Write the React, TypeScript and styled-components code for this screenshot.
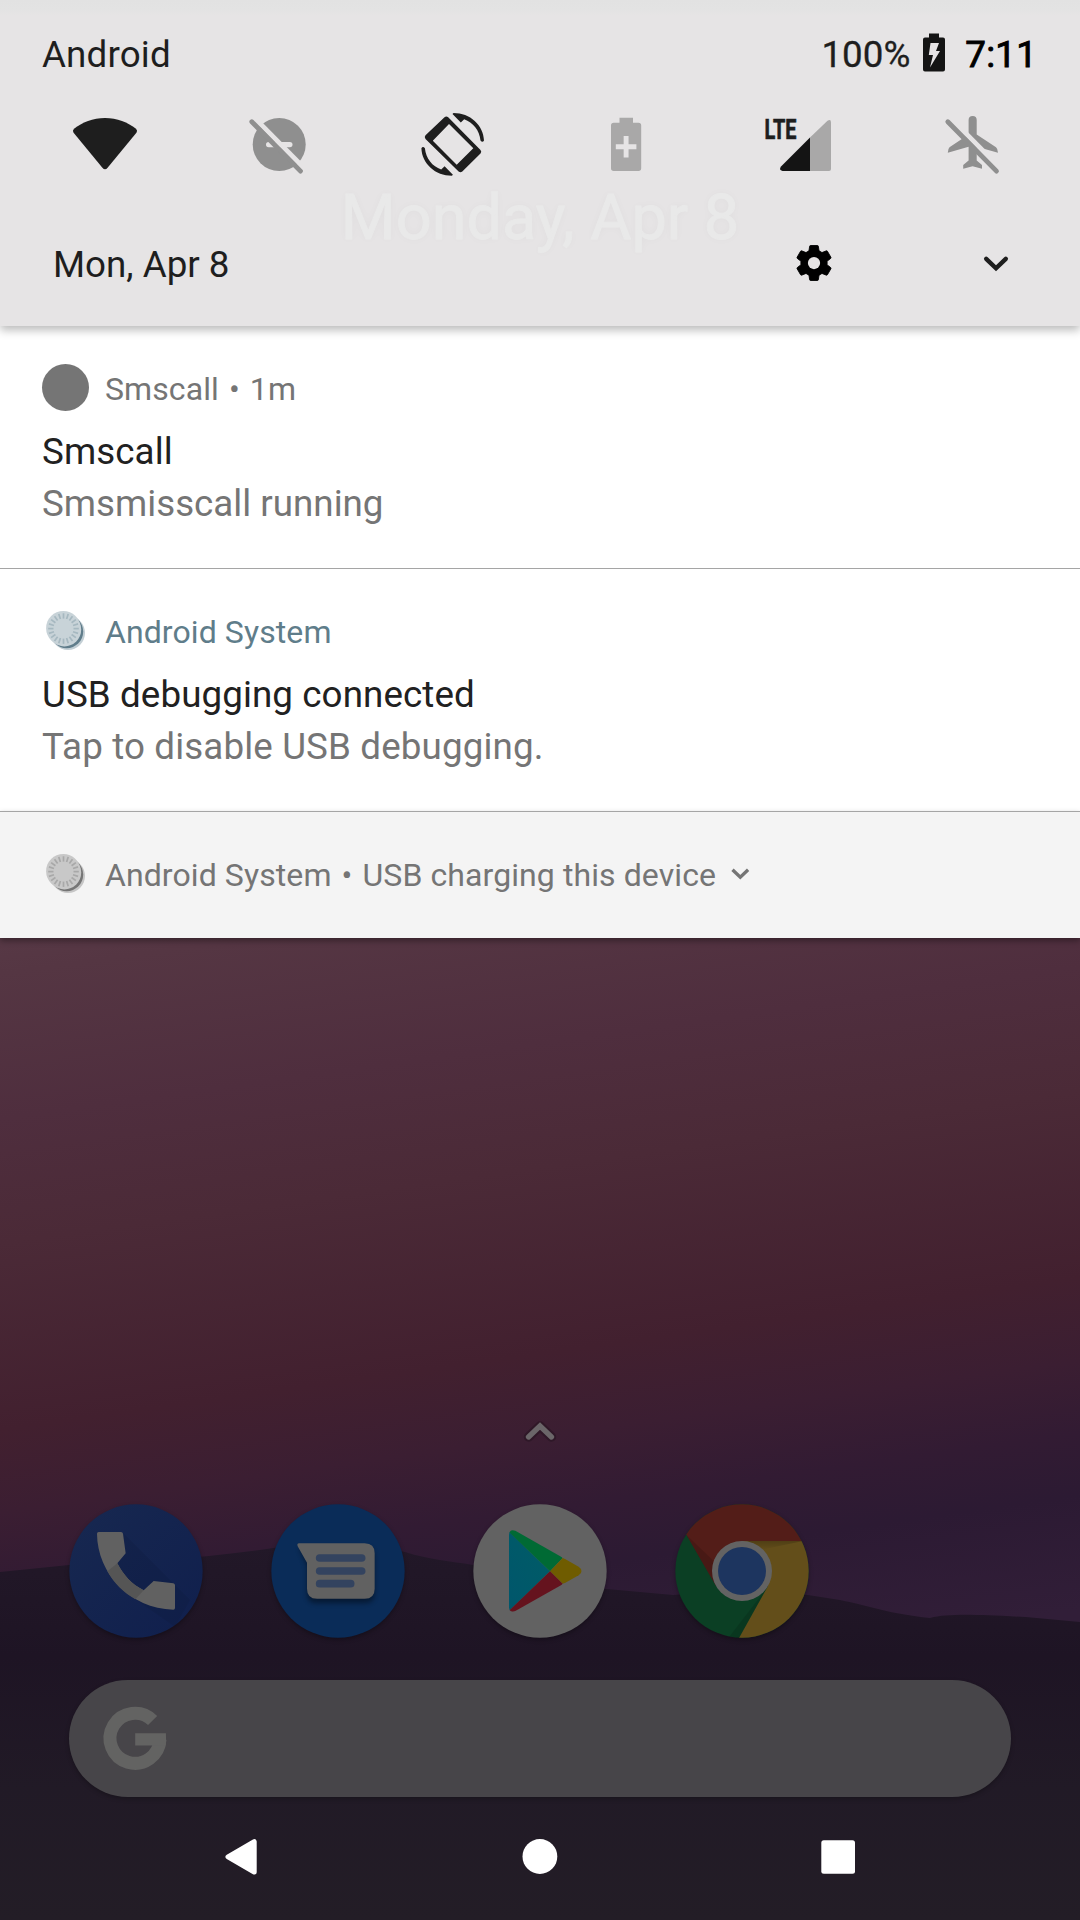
import React from "react";
import styled, { createGlobalStyle } from "styled-components";

const GlobalStyle = createGlobalStyle`
  * { box-sizing: border-box; }
  body { margin: 0; background: #221c26; }
  svg { display: block; flex: none; overflow: visible; }
`;

const panel = "#e6e4e5";
const dim = "#8f8f8f";
const faint = "#a9a8a8";
const ink = "#1e1e1e";

const Screen = styled.main`
  position: relative;
  display: flex;
  flex-direction: column;
  width: 1080px;
  height: 1920px;
  overflow: hidden;
  font-family: Roboto, "Noto Sans", sans-serif;
  background: linear-gradient(
    172deg,
    #5b3d4a 42%,
    #553643 47%,
    #4f2e3e 54%,
    #4b2a37 60%,
    #42202f 69%,
    #3b1e32 73%,
    #321b33 76.5%,
    #2c1a33 79.5%,
    #311e38 85%
  );
`;

const Hills = styled.svg`
  position: absolute;
  left: 0;
  bottom: 0;
`;

const QuickPanel = styled.header`
  position: relative;
  z-index: 2;
  flex: none;
  height: 326px;
  background: linear-gradient(#e2e2e2 0, #e3e3e3 10px, ${panel} 15px);
  box-shadow: 0 4px 9px rgba(0, 0, 0, 0.28);
`;

const GhostDate = styled.div`
  position: absolute;
  top: 181px;
  left: 0;
  width: 100%;
  text-align: center;
  font-size: 63px;
  line-height: 74px;
  color: #e9e9e9;
  -webkit-text-stroke: 0.8px #e9e9e9;
  text-shadow: 0 0 8px rgba(0, 0, 0, 0.03);
`;

const StatusRow = styled.div`
  position: relative;
  display: flex;
  align-items: center;
  height: 109px;
  padding: 0 43px 0 42px;
  font-size: 36.75px;
  color: ${ink};
`;

const Carrier = styled.span`
  flex: 1;
  letter-spacing: 0.15px;
`;

const Percent = styled.span`
  -webkit-text-stroke: 0.3px ${ink};
`;

const Clock = styled.span`
  margin-left: 20px;
  letter-spacing: 0.2px;
  -webkit-text-stroke: 0.9px #000;
  color: #000;
`;

const BatteryIcon = styled.svg`
  margin-left: 13px;
`;

const Tiles = styled.div`
  position: relative;
  display: grid;
  grid-template-columns: repeat(6, 174px);
  justify-items: center;
  align-items: center;
  height: 70px;
  padding: 0 18px;
`;

const DateRow = styled.div`
  position: relative;
  display: flex;
  align-items: center;
  height: 147px;
  padding: 24px 70px 0 53px;
  font-size: 36.75px;
  color: ${ink};
`;

const DateText = styled.span`
  flex: 1;
`;

const ExpandIcon = styled.svg`
  margin-left: 147px;
`;

const Notification = styled.section<{ $quiet?: boolean; $line?: boolean }>`
  position: relative;
  z-index: 1;
  flex: none;
  height: ${(p) => (p.$quiet ? 127 : p.$line ? 243 : 242)}px;
  padding: 36px 42px 0;
  background: ${(p) => (p.$quiet ? "#f4f4f4" : "#fff")};
  border-top: ${(p) => (p.$line ? "1px solid #a5a5a5" : "none")};
  box-shadow: ${(p) => (p.$quiet ? "0 3px 6px rgba(0, 0, 0, 0.35)" : "none")};
`;

const NoteHeader = styled.div<{ $color: string }>`
  display: flex;
  align-items: center;
  height: 51px;
  font-size: 32px;
  letter-spacing: 0.09px;
  color: ${(p) => p.$color};
  > svg:first-child {
    margin-right: 16px;
  }
`;

const NoteLabel = styled.span`
  padding-top: 2px;
  white-space: nowrap;
`;

const Bullet = styled(NoteLabel)`
  margin: 0 10px;
`;

const MoreIcon = styled.svg`
  margin-left: 14px;
`;

const NoteTitle = styled.div`
  margin-top: 13px;
  font-size: 36.75px;
  line-height: 52px;
  letter-spacing: 0.09px;
  color: #212121;
`;

const NoteText = styled.div<{ $spacing?: number }>`
  font-size: 36.75px;
  line-height: 52px;
  letter-spacing: ${(p) => p.$spacing ?? 0}px;
  color: #757575;
`;

const Home = styled.div`
  position: relative;
  display: flex;
  flex-direction: column;
  flex: 1;
  padding-top: 478px;
`;

const DrawerHandle = styled.div`
  display: flex;
  justify-content: center;
  height: 30px;
`;

const Dock = styled.div`
  display: grid;
  grid-template-columns: repeat(5, 202px);
  justify-items: center;
  margin-top: 58px;
  padding: 0 35px;
`;

const AppIcon = styled.svg`
  width: 134px;
  height: 134px;
  filter: drop-shadow(0 2px 2px rgba(0, 0, 0, 0.3));
`;

const SearchBar = styled.div`
  display: flex;
  align-items: center;
  height: 117px;
  margin: 42px 69px 0;
  padding-left: 35px;
  border-radius: 58.5px;
  background: #474549;
  box-shadow: 0 2px 4px rgba(0, 0, 0, 0.25);
`;

const NavBar = styled.nav`
  display: flex;
  align-items: center;
  justify-content: space-between;
  height: 120px;
  padding: 0 222px 0 221px;
`;

const SignalLabel = styled.text`
  font-family: Roboto, sans-serif;
  font-size: 28.5px;
  font-weight: 700;
  fill: ${ink};
  stroke: ${ink};
  stroke-width: 0.7px;
`;

function Tile({ x, children }: { x: number; children: React.ReactNode }) {
  return (
    <svg width="70" height="70" viewBox={`${x - 35} 109 70 70`}>
      {children}
    </svg>
  );
}

function Slash({ x }: { x: number }) {
  const line = `M${x - 24.7} 121.800 L${x + 24} 171.100`;
  return (
    <>
      <path d={line} stroke={panel} strokeWidth="4.900" transform="translate(0 -6.600)" />
      <path d={line} stroke={dim} strokeWidth="4.800" strokeLinecap="round" />
    </>
  );
}

function SystemBadge({ face, edge, rim, tick }: { face: string; edge: string; rim: string; tick: string }) {
  const ticks = Array.from({ length: 20 }, (_, i) => i * 18);
  return (
    <svg width="47" height="47" viewBox="0 0 47 47">
      <circle cx="26" cy="26" r="17" fill={rim} />
      <circle cx="24.600" cy="24.600" r="16.600" fill={edge} />
      <circle cx="22.400" cy="22.600" r="16.800" fill={face} />
      <circle cx="21.300" cy="21.200" r="17.200" fill={face} />
      {ticks.map((a) => (
        <path key={a} d="M21.500 6.300 V11.600" stroke={tick} strokeWidth="1.700" transform={`rotate(${a} 21.500 21.600)`} />
      ))}
    </svg>
  );
}

export default function App() {
  return (
    <>
      <GlobalStyle />
      <Screen>
        <Hills width="1080" height="400" viewBox="0 1520 1080 400">
          <defs>
            <linearGradient id="hill" x1="0" y1="0" x2="0" y2="1">
              <stop offset="0" stopColor="#221828" />
              <stop offset="0.3" stopColor="#1e1424" />
              <stop offset="0.65" stopColor="#211a26" />
              <stop offset="1" stopColor="#231d26" />
            </linearGradient>
          </defs>
          <path
            d="M0 1572 L69 1565 C130 1562 200 1559 273 1548 C320 1541 370 1541 405 1552 C430 1560 450 1561 473 1565 C520 1578 560 1587 607 1589 L673 1595 C720 1592 770 1591 808 1595 L840 1600 C870 1606 890 1614 930 1618 C950 1613 980 1615 1026 1617 L1080 1622 V1920 H0Z"
            fill="url(#hill)"
          />
        </Hills>

        <QuickPanel>
          <GhostDate>Monday, Apr 8</GhostDate>
          <StatusRow>
            <Carrier>Android</Carrier>
            <Percent>100%</Percent>
            <BatteryIcon width="22" height="38" viewBox="0 0 22 38" transform="translate(0 -2.500)">
              <path d="M6 0H16V4H20Q22 4 22 6V36Q22 38 20 38H2Q0 38 0 36V6Q0 4 2 4H6Z" fill="#141414" />
              <path d="M7.500 9.500H16L13 17.500H17L7 34L10 21.500H5.800Z" fill={panel} />
            </BatteryIcon>
            <Clock>7:11</Clock>
          </StatusRow>
          <Tiles>
            <Tile x={105}>
              <path
                d="M105 118C93 118 82 122.500 74 128.800Q72 130.700 73.600 132.800L102.400 167.800Q105 170.800 107.600 167.800L136.400 132.800Q138 130.700 136 128.800C128 122.500 117 118 105 118Z"
                fill={ink}
              />
            </Tile>
            <Tile x={279}>
              <circle cx="279.200" cy="144.400" r="26.500" fill={dim} />
              <rect x="266" y="142" width="26.500" height="5.200" rx="2.600" fill={panel} />
              <Slash x={276.5} />
            </Tile>
            <Tile x={453}>
              <path
                fillRule="evenodd"
                d="M444.500 117.200Q446.300 115.700 448.200 117.200L480.500 150Q482 151.700 480.500 153.500L462.300 171.500Q460.400 173 458.600 171.500L425.500 139Q424 137 425.500 135.200ZM449 124L432.800 140.700L456.700 164.700L473.300 148.300Z"
                fill={ink}
              />
              <path
                d="M453.500 113C470 113 483.500 125 484 140.500Q482.500 143 480.500 140.500C479.500 130 473 122.500 464.200 119.200L460.800 122.500L452.500 114Z"
                fill={ink}
              />
              <path
                d="M451.900 175.800C435.400 175.800 421.900 163.800 421.400 148.300Q422.900 145.800 424.900 148.300C425.900 158.800 432.400 166.300 441.200 169.600L444.600 166.300L452.900 174.800Z"
                fill={ink}
              />
            </Tile>
            <Tile x={627}>
              <path
                d="M619.500 117.700H633V122.700H638.500Q641.200 122.700 641.200 125.500V168.300Q641.200 171 638.500 171H613.700Q611 171 611 168.300V125.500Q611 122.700 613.700 122.700H619.500Z"
                fill={faint}
              />
              <path d="M626.100 136V157.400M615.800 146.700H636.400" stroke={panel} strokeWidth="4.900" />
            </Tile>
            <Tile x={801}>
              <path d="M810 137.500L827.500 120.800Q831 118.800 831 122.500V169Q831 171 829 171H810Z" fill={faint} />
              <path d="M810 137.500V171H782.500Q778.500 170 781 166.500Z" fill="#141414" />
              <SignalLabel x="764.500" y="139.300" textLength="32" lengthAdjust="spacingAndGlyphs">
                LTE
              </SignalLabel>
            </Tile>
            <Tile x={975}>
              <path
                d="M968.600 120a4.050 4.050 0 0 1 8.100 0V134.500L996 147.300Q998 149 998 152.800L976.700 146.800V160.500L982 165V168.700L972.600 166.200L963.200 168.700V165L968.600 160.500V146.800L947.800 152.800Q947.800 149 949.500 147.300L968.600 134.500Z"
                fill={dim}
              />
              <Slash x={972.5} />
            </Tile>
          </Tiles>
          <DateRow>
            <DateText>Mon, Apr 8</DateText>
            <svg width="42" height="42" viewBox="0 0 24 24" transform="translate(0 -2)">
              <path
                d="M19.430 12.980c.04-.32.07-.64.07-.98s-.03-.66-.07-.98l2.110-1.650c.19-.15.24-.42.12-.64l-2-3.460c-.12-.22-.39-.3-.61-.22l-2.490 1c-.52-.4-1.080-.73-1.690-.98l-.38-2.650C14.460 2.180 14.250 2 14 2h-4c-.25 0-.46.18-.49.42l-.38 2.650c-.61.25-1.170.59-1.690.98l-2.490-1c-.23-.09-.49 0-.61.22l-2 3.460c-.13.22-.07.49.12.64l2.110 1.650c-.04.32-.07.65-.07.98s.03.66.07.98l-2.110 1.650c-.19.15-.24.42-.12.64l2 3.460c.12.22.39.3.61.22l2.490-1c.52.4 1.080.73 1.690.98l.38 2.650c.03.24.24.42.49.42h4c.25 0 .46-.18.49-.42l.38-2.650c.61-.25 1.170-.59 1.690-.98l2.490 1c.23.09.49 0 .61-.22l2-3.460c.12-.22.07-.49-.12-.64l-2.110-1.650z"
                stroke="#000"
                strokeWidth="0.500"
              />
              <circle cx="12" cy="12" r="3.500" fill={panel} />
            </svg>
            <ExpandIcon width="28" height="20" viewBox="982 255 28 20">
              <path d="M986.200 258.800L996 268.300L1005.800 258.800" fill="none" stroke={ink} strokeWidth="4.400" strokeLinecap="round" />
            </ExpandIcon>
          </DateRow>
        </QuickPanel>

        <Notification>
          <NoteHeader $color="#757575">
            <svg width="47" height="47" viewBox="0 0 47 47">
              <circle cx="23.500" cy="23.500" r="23.500" fill="#757575" />
            </svg>
            <NoteLabel>Smscall</NoteLabel>
            <Bullet>•</Bullet>
            <NoteLabel>1m</NoteLabel>
          </NoteHeader>
          <NoteTitle>Smscall</NoteTitle>
          <NoteText>Smsmisscall running</NoteText>
        </Notification>

        <Notification $line>
          <NoteHeader $color="#5f7d8a">
            <SystemBadge face="#c8d3d8" edge="#607d8b" rim="#c3cfd5" tick="#a6b8c0" />
            <NoteLabel>Android System</NoteLabel>
          </NoteHeader>
          <NoteTitle>USB debugging connected</NoteTitle>
          <NoteText $spacing={0.13}>Tap to disable USB debugging.</NoteText>
        </Notification>

        <Notification $quiet $line>
          <NoteHeader $color="#757575">
            <SystemBadge face="#c8c8c8" edge="#757575" rim="#c6c6c6" tick="#a8a8a8" />
            <NoteLabel>Android System</NoteLabel>
            <Bullet>•</Bullet>
            <NoteLabel>USB charging this device</NoteLabel>
            <MoreIcon width="20" height="14" viewBox="730 868 20 14">
              <path d="M732.500 870.800L740.300 878.300L748.100 870.800" fill="none" stroke="#757575" strokeWidth="3.300" />
            </MoreIcon>
          </NoteHeader>
        </Notification>

        <Home>
          <DrawerHandle>
            <svg width="40" height="30" viewBox="520 1416 40 30">
              <path d="M528.500 1437L540 1426L551.500 1437" fill="none" stroke="#000" strokeOpacity="0.2" strokeWidth="9.500" strokeLinecap="round" strokeLinejoin="round" />
              <path d="M528.500 1437L540 1426L551.500 1437" fill="none" stroke="#6b6669" strokeWidth="5.300" strokeLinecap="round" />
            </svg>
          </DrawerHandle>
          <Dock>
            <AppIcon viewBox="87 312 402 402">
              <defs>
                <linearGradient id="phone" x1="0" y1="0" x2="1" y2="1">
                  <stop offset="0" stopColor="#172850" />
                  <stop offset="1" stopColor="#101f4d" />
                </linearGradient>
                <clipPath id="phoneClip">
                  <circle cx="288" cy="513" r="200" />
                </clipPath>
              </defs>
              <circle cx="288" cy="513" r="200" fill="url(#phone)" />
              <path d="M250 400L450 600L405 680L286 598L232 490Z" fill="#000" opacity="0.06" clipPath="url(#phoneClip)" />
              <path
                d="M171 401Q171 396 176 396H243Q248 396 249 401L257 460L232 490C250 525 275 553 311 571L341 543L400 550Q405 551 405 556V624Q405 629 400 629C270 625 172 520 171 401Z"
                fill="#616161"
              />
              <path d="M202 514L232 490C250 525 275 553 311 571L286 598C250 578 222 550 202 514Z" fill="#555" />
            </AppIcon>
            <AppIcon viewBox="693 312 402 402">
              <defs>
                <filter id="soft" x="-20%" y="-20%" width="140%" height="150%">
                  <feGaussianBlur stdDeviation="8" />
                </filter>
              </defs>
              <circle cx="894" cy="513" r="200" fill="#0a2c58" />
              <path d="M777 442H974Q1004 442 1004 470V580Q1004 610 974 610H829Q801 610 801 580V498Z" fill="#000" opacity="0.4" filter="url(#soft)" />
              <path d="M777 430H974Q1004 430 1004 460V566Q1004 596 974 596H831Q801 596 801 566V488L773 439Q770 430 777 430Z" fill="#616161" />
              <path d="M839 474H965M839 513H965M839 551H932" stroke="#33435f" strokeWidth="23" strokeLinecap="round" />
            </AppIcon>
            <AppIcon viewBox="99 312 402 402">
              <defs>
                <linearGradient id="play" x1="1" y1="0" x2="0" y2="1">
                  <stop offset="0" stopColor="#005c66" />
                  <stop offset="1" stopColor="#00566c" />
                </linearGradient>
                <clipPath id="playClip">
                  <path d="M207 404Q208 386 226 392L416 500Q434 513 416 526L226 633Q208 640 207 622Z" />
                </clipPath>
              </defs>
              <circle cx="300" cy="513" r="200" fill="#626262" />
              <g clipPath="url(#playClip)">
                <path d="M200 388L330 514L200 640Z" fill="url(#play)" />
                <path d="M205 385H300L368 474L330 514L207 396Z" fill="#006a34" />
                <path d="M368 474L440 490V535L368 551L330 514Z" fill="#6f5c00" />
                <path d="M330 514L368 551L300 640H205L207 632Z" fill="#65131e" />
              </g>
            </AppIcon>
            <AppIcon viewBox="705 312 402 402">
              <defs>
                <clipPath id="chromeClip">
                  <circle cx="906" cy="513" r="200" />
                </clipPath>
                <linearGradient id="fold" x1="0" y1="0" x2="0" y2="1">
                  <stop offset="0" stopColor="#000" stopOpacity="0.2" />
                  <stop offset="1" stopColor="#000" stopOpacity="0" />
                </linearGradient>
              </defs>
              <g clipPath="url(#chromeClip)">
                <rect x="705" y="312" width="402" height="402" fill="#0b3f24" />
                <path d="M906 423H1110V714H897L984 558L906 513Z" fill="#634e1a" />
                <path d="M739 404L690 312H1120V423H906V513L828 558Z" fill="#531d18" />
                <path d="M920 423H1090L960 450Z" fill="url(#fold)" />
                <path d="M980 565L897 714H865Z" fill="#000" opacity="0.12" />
                <path d="M739 404L828 558L818 480Z" fill="#000" opacity="0.12" />
              </g>
              <circle cx="906" cy="513" r="90" fill="#636363" />
              <circle cx="906" cy="513" r="72" fill="#1d355f" />
            </AppIcon>
          </Dock>
          <SearchBar>
            <svg width="62" height="64" viewBox="104 1705.500 62 64">
              <path d="M152.600 1719A25 25 0 1 0 160 1738" fill="none" stroke="#636362" strokeWidth="13" />
              <path d="M135.200 1731.700H165.900Q166.300 1738 165.700 1744H135.200Z" fill="#636362" />
            </svg>
          </SearchBar>
          <NavBar>
            <svg width="40" height="40" viewBox="221 1837 40 40">
              <path d="M228 1856.800L254.200 1841.700V1872Z" fill="#fff" stroke="#fff" strokeWidth="5" strokeLinejoin="round" />
            </svg>
            <svg width="40" height="40" viewBox="519.500 1837 40 40">
              <circle cx="539.400" cy="1856.500" r="17.400" fill="#fff" />
            </svg>
            <svg width="40" height="40" viewBox="818 1837 40 40">
              <rect x="821.300" y="1840.300" width="33.700" height="33.500" rx="2.500" fill="#fff" />
            </svg>
          </NavBar>
        </Home>
      </Screen>
    </>
  );
}
